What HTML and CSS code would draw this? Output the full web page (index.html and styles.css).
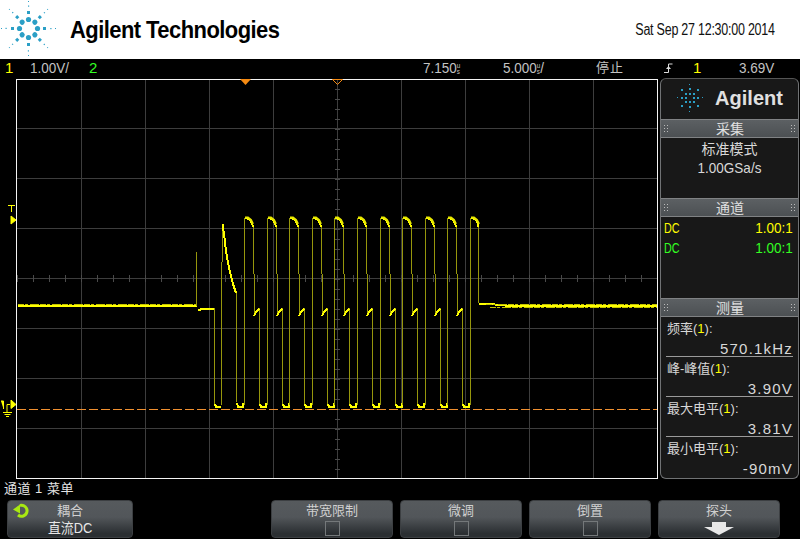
FILE: index.html
```html
<!DOCTYPE html>
<html lang="zh">
<head>
<meta charset="utf-8">
<title>Agilent Technologies</title>
<link rel="stylesheet" href="styles.css">
</head>
<body>
<header class="brand">
  <svg class="burst" width="58" height="59" viewBox="0 0 58 59">
    <defs>
      <g id="spoke">
        <circle cx="28.5" cy="19.5" r="2.6"/>
        <rect x="27" y="11" width="3" height="3"/>
        <rect x="28" y="5.500" width="1.200" height="1.200"/>
        <rect x="28" y="1" width="1" height="1"/>
      </g>
    </defs>
    <g fill="#2b9fc6">
      <use href="#spoke"/>
      <use href="#spoke" transform="rotate(90 28.5 28.5)"/>
      <use href="#spoke" transform="rotate(180 28.5 28.5)"/>
      <use href="#spoke" transform="rotate(270 28.5 28.5)"/>
      <use href="#spoke" transform="rotate(45 28.5 28.5)"/>
      <use href="#spoke" transform="rotate(135 28.5 28.5)"/>
      <use href="#spoke" transform="rotate(225 28.5 28.5)"/>
      <use href="#spoke" transform="rotate(315 28.5 28.5)"/>
    </g>
  </svg>
  <span class="brand-name">Agilent Technologies</span>
  <span class="brand-date">Sat Sep 27 12:30:00 2014</span>
</header>

<div class="status">
  <span class="st st-ch1 yellow">1</span>
  <span class="st st-scale">1.00V/</span>
  <span class="st st-ch2 green">2</span>
  <span class="st st-delay">7.150<span class="us"><i>u</i><i>s</i></span></span>
  <span class="st st-time">5.000<span class="us"><i>u</i><i>s</i></span>/</span>
  <span class="st st-run">停止</span>
  <svg class="st st-edge" width="9" height="10" viewBox="0 0 9 10"><path d="M0 9.500H4.500V1H8.500" fill="none" stroke="#ddd"/><path d="M2 6L4.500 3L7 6Z" fill="#ddd"/></svg>
  <span class="st st-src yellow">1</span>
  <span class="st st-level">3.69V</span>
</div>

<main class="main">
  <svg class="scope" width="660" height="401" viewBox="0 78 660 401">
    <defs>
      <g id="pulse">
        <path class="edge" d="M244.500 405V218M253 225V274M254 274V315M259.500 308V405"/>
        <path class="thick" d="M245 218H247L250 220L252 223L253 227M254 316L256 312L259 309M260 404L261 407H266L266.500 403"/>
        <path class="cap" d="M245 217.500H248L251 220L253 224"/>
      </g>
    </defs>
    <g class="grid">
      <path d="M81 79V478M145 79V478M209 79V478M273 79V478M337 79V478M401 79V478M465 79V478M529 79V478M593 79V478"/>
      <path d="M17 128.500H657M17 178.500H657M17 228.500H657M17 278.500H657M17 328.500H657M17 378.500H657M17 428.500H657"/>
      <line class="tick-h" x1="17" y1="278.500" x2="657" y2="278.500"/>
      <line class="tick-v" x1="337.500" y1="79" x2="337.500" y2="478"/>
    </g>
    <path class="frame" d="M16.500 79.500H657.500V478.500H16.500Z"/>
    <line class="ground" x1="17" y1="409.500" x2="657" y2="409.500"/>
    <path class="mark" d="M240 79H251L245.500 85Z"/>
    <path class="mark-o" d="M332.500 79.500H342.500L337.500 84.500Z"/>

    <g class="trace">
      <path class="thick" d="M18 306H197M198 310H200L202 308.500H214"/>
      <line class="noise" x1="18" y1="304.500" x2="197" y2="304.500"/>
      <path class="edge" d="M196.500 306V252M214.500 308V405M221.500 405V262M222.500 262V224M236.500 293V402"/>
      <path class="thick" d="M215 404L216 407H221M222.500 224L224 234L226 251L229 268L233 284L236 293M237 403L238 407H243L243.500 403"/>
      <use href="#pulse"/>
      <use href="#pulse" x="23"/>
      <use href="#pulse" x="45"/>
      <use href="#pulse" x="68"/>
      <use href="#pulse" x="90"/>
      <use href="#pulse" x="113"/>
      <use href="#pulse" x="136"/>
      <use href="#pulse" x="158"/>
      <use href="#pulse" x="181"/>
      <use href="#pulse" x="203"/>
      <path class="edge" d="M470.500 405V218M478 225V303"/>
      <path class="thick" d="M471 218H473L476 220L477.500 223L478 227M479 304H490L510 306H657"/>
      <path class="cap" d="M471 217.500H474L477 220L479 224"/>
      <line class="noise" x1="486" y1="304.500" x2="657" y2="304.500"/>
      <line class="noise" x1="490" y1="307.500" x2="657" y2="307.500"/>
    </g>

    <g class="markers">
      <path d="M8 205.500H15M11.500 205V212M11 216L16 220L11 224Z"/>
      <path d="M1 401H3.500V409M11 400L16 404.500L11 408.500Z"/>
      <path class="thin" d="M10 404.500H7V412M3 412.500H12M4.500 414.500H10.500M6 416.500H9"/>
    </g>
  </svg>

  <aside class="panel">
    <div class="panel-logo">
      <svg width="28" height="30" viewBox="0 0 28 30">
        <g fill="#2b9fc6">
          <rect x="13" y="1" width="1" height="1"/><rect x="13" y="5" width="2" height="2"/><rect x="13" y="10" width="2" height="2"/>
          <rect x="13" y="18" width="2" height="2"/><rect x="13" y="23" width="2" height="2"/><rect x="13" y="28" width="1" height="1"/>
          <rect x="1" y="14" width="1" height="1"/><rect x="5" y="14" width="2" height="2"/><rect x="9" y="14" width="2" height="2"/>
          <rect x="17" y="14" width="2" height="2"/><rect x="21" y="14" width="2" height="2"/><rect x="26" y="14" width="1" height="1"/>
          <rect x="9" y="10" width="2" height="2"/><rect x="17" y="10" width="2" height="2"/><rect x="9" y="18" width="2" height="2"/><rect x="17" y="18" width="2" height="2"/>
          <rect x="5" y="6" width="2" height="2"/><rect x="21" y="6" width="2" height="2"/><rect x="5" y="22" width="2" height="2"/><rect x="21" y="22" width="2" height="2"/>
        </g>
      </svg>
      <span>Agilent</span>
    </div>

    <div class="sec-head"><span class="grip"></span><span>采集</span><span class="grip"></span></div>
    <div class="sec-acq">
      <div>标准模式</div>
      <div class="acq-rate">1.00GSa/s</div>
    </div>

    <div class="sec-head"><span class="grip"></span><span>通道</span><span class="grip"></span></div>
    <div class="sec-chan">
      <div class="chan yellow"><span class="dc">DC</span><span class="ratio">1.00:1</span></div>
      <div class="chan green"><span class="dc">DC</span><span class="ratio">1.00:1</span></div>
    </div>

    <div class="sec-head"><span class="grip"></span><span>测量</span><span class="grip"></span></div>
    <div class="sec-meas">
      <div class="meas"><div>频率(<span class="yellow">1</span>):</div><div class="val">570.1kHz</div></div>
      <div class="meas"><div>峰-峰值(<span class="yellow">1</span>):</div><div class="val">3.90V</div></div>
      <div class="meas"><div>最大电平(<span class="yellow">1</span>):</div><div class="val">3.81V</div></div>
      <div class="meas"><div>最小电平(<span class="yellow">1</span>):</div><div class="val">-90mV</div></div>
    </div>
  </aside>
</main>

<footer class="foot">
  <div class="menu-title">通道 1 菜单</div>
  <div class="keys">
    <div class="key key-first">
      <svg class="key-icon" width="18" height="16" viewBox="0 0 18 16"><path d="M7 2.500A5.500 5.500 0 1 1 5 12" fill="none" stroke="#a8e812" stroke-width="3"/><path d="M0 6.500L7 1.500V10.500Z" fill="#a8e812"/></svg>
      <span>耦合</span><span class="key-val">直流DC</span>
    </div>
    <div class="key-group">
      <div class="key"><span>带宽限制</span><span class="check"></span></div>
      <div class="key"><span>微调</span><span class="check"></span></div>
      <div class="key"><span>倒置</span><span class="check"></span></div>
      <div class="key"><span>探头</span><svg class="down" width="30" height="13" viewBox="0 0 30 13"><path d="M8 0H22V5H30L15 13L0 5H8Z" fill="#e8e8e8"/></svg></div>
    </div>
  </div>
</footer>
</body>
</html>
```
FILE: styles.css
```css
* { box-sizing: border-box; }
html, body { margin: 0; padding: 0; }
body {
  width: 800px;
  height: 539px;
  overflow: hidden;
  background: #000;
  color: #d8d8d8;
  font-family: "Liberation Sans", "Noto Sans CJK SC", sans-serif;
}
.yellow { color: #ffff00; }
.green { color: #33ff22; }

.brand {
  display: flex;
  align-items: center;
  height: 59px;
  background: #fff;
  color: #000;
}
.burst { flex: none; }
.brand-name {
  margin-left: 12px;
  font-size: 24px;
  font-weight: 700;
  letter-spacing: -0.6px;
  transform: scaleX(0.915);
  transform-origin: left center;
}
.brand-date {
  margin-left: auto;
  margin-right: 25px;
  font-size: 16px;
  letter-spacing: -0.3px;
  color: #111;
  transform: scaleX(0.78);
  transform-origin: right center;
}

.status {
  display: grid;
  grid-template-columns: 25px 59px 334px 80px 93px 68px 29px 46px 1fr;
  align-items: center;
  height: 19px;
  padding: 0 0 2px 5px;
  font-size: 15px;
  line-height: 17px;
  color: #c4c4c4;
  white-space: nowrap;
}
.st-scale, .st-delay, .st-time, .st-level {
  transform: scaleX(0.9);
  transform-origin: left center;
}
.st-delay, .st-time { height: 17px; }
.st-run { font-size: 13px; letter-spacing: 1px; }
.us {
  display: inline-flex;
  flex-direction: column;
  vertical-align: 5px;
  font-size: 7px;
  line-height: 6px;
  letter-spacing: 0;
}
.us i { font-style: normal; }

.main {
  display: flex;
  height: 401px;
}
.scope { flex: none; display: block; }
.grid path { fill: none; stroke: #3d3d3d; stroke-width: 1; shape-rendering: crispEdges; }
.grid line { stroke: #4a4a4a; shape-rendering: crispEdges; }
.tick-h { stroke-width: 7; stroke-dasharray: 1 15; }
.tick-v { stroke-width: 5; stroke-dasharray: 1 9; }
.frame { fill: none; stroke: #f4f4f4; stroke-width: 1; shape-rendering: crispEdges; }
.ground { stroke: #f09030; stroke-width: 1; stroke-dasharray: 9 3; shape-rendering: crispEdges; }
.mark { fill: #f58a12; }
.mark-o { fill: none; stroke: #f58a12; }
.edge { fill: none; stroke: #96960c; stroke-width: 1; shape-rendering: crispEdges; }
.thick { fill: none; stroke: #ffff00; stroke-width: 2; shape-rendering: crispEdges; }
.cap { fill: none; stroke: #e8e800; stroke-width: 2; }
.noise { stroke: #c4c400; stroke-width: 1.500; stroke-dasharray: 6 1 3 2 9 1; shape-rendering: crispEdges; }
.markers path { fill: #ffff00; stroke: #ffff00; stroke-width: 1; }
.markers .thin { fill: none; }

.panel {
  flex: none;
  width: 139px;
  display: flex;
  flex-direction: column;
  background: #181818;
  border: 1px solid #707274;
  border-top-color: #555;
  border-radius: 6px;
  font-size: 13px;
}
.panel-logo {
  display: flex;
  align-items: center;
  justify-content: center;
  gap: 11px;
  height: 40px;
  padding-bottom: 2px;
  color: #e0e0e0;
  font-size: 20px;
  font-weight: 700;
}
.sec-head {
  display: flex;
  align-items: center;
  justify-content: space-between;
  height: 19px;
  padding: 1px 2px 0 3px;
  background: linear-gradient(#5c6063, #4c5053);
  border-top: 1px solid #808284;
  border-bottom: 1px solid #808284;
  color: #e0e0e0;
  font-size: 14px;
  line-height: 16px;
}
.grip {
  width: 5px;
  height: 8px;
  background: radial-gradient(circle at 0.5px 0.5px, #bbb 0.7px, transparent 0.8px) 0 0 / 3px 3px;
}
.sec-acq {
  height: 60px;
  padding-top: 1px;
  text-align: center;
  font-size: 14px;
  line-height: 20px;
}
.acq-rate {
  margin-top: -1px;
  font-size: 15px;
  transform: scaleX(0.9);
}
.sec-chan {
  height: 81px;
  padding: 1px 5px 0 3px;
  font-size: 15px;
  line-height: 20px;
}
.chan {
  display: flex;
  justify-content: space-between;
}
.dc { transform: scaleX(0.72); transform-origin: left center; }
.ratio { transform: scaleX(0.9); transform-origin: right center; }
.sec-meas {
  padding: 0 5px;
  font-size: 13px;
}
.meas {
  height: 40px;
  padding: 2px 0 0 1px;
  line-height: 20px;
  border-bottom: 1px solid #9a9a9a;
}
.meas:last-child { border-bottom: 0; }
.val {
  margin-top: 2px;
  text-align: right;
  letter-spacing: 1.2px;
  font-size: 15px;
  line-height: 16px;
}

.foot { height: 60px; }
.menu-title {
  height: 21px;
  padding-left: 4px;
  font-size: 13px;
  line-height: 19px;
  letter-spacing: 0.5px;
  color: #e4e4e4;
}
.keys {
  display: flex;
  padding-left: 7px;
}
.key {
  position: relative;
  display: flex;
  flex-direction: column;
  align-items: center;
  width: 122px;
  height: 38px;
  padding-top: 1px;
  background: linear-gradient(#565a5d 0%, #52565a 45%, #2b2f32 90%);
  border: 1px solid #3c3f42;
  border-radius: 4px;
  font-size: 13px;
  line-height: 17px;
  color: #d0d0d0;
}
.key-first { width: 126px; }
.key-val { font-size: 14px; line-height: 19px; color: #e8e8e8; transform: scaleX(0.92); }
.key-icon { position: absolute; left: 5px; top: 2px; }
.key-group {
  display: flex;
  gap: 7px;
  margin-left: 138px;
}
.check {
  width: 15px;
  height: 15px;
  margin-top: 2px;
  border: 1px solid #74787a;
}
.down { margin-top: 3px; }
```
